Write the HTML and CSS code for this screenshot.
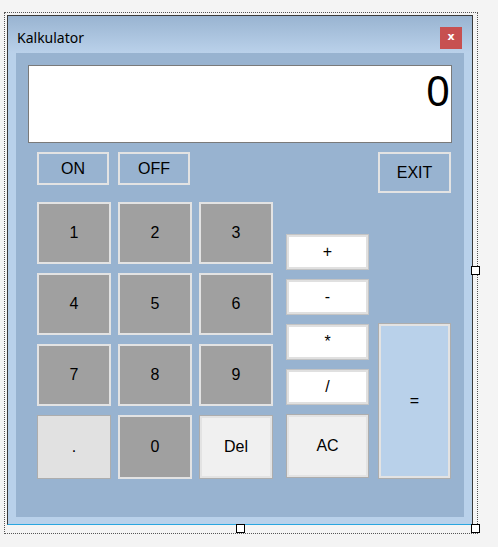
FILE: index.html
```html
<!DOCTYPE html>
<html>
<head>
<meta charset="utf-8">
<title>Kalkulator</title>
<link rel="stylesheet" href="styles.css">
</head>
<body>
<div class="stage">
  <div class="selection">
    <div class="form">
      <div class="titlebar">
        <span class="title">Kalkulator</span>
        <span class="close">x</span>
      </div>
      <div class="client">
        <div class="display">0</div>
        <div class="body">
          <div class="left">
            <div class="power">
              <button class="btn ctrl">ON</button>
              <button class="btn ctrl">OFF</button>
            </div>
            <div class="digits">
              <button class="btn digit">1</button>
              <button class="btn digit">2</button>
              <button class="btn digit">3</button>
              <button class="btn digit">4</button>
              <button class="btn digit">5</button>
              <button class="btn digit">6</button>
              <button class="btn digit">7</button>
              <button class="btn digit">8</button>
              <button class="btn digit">9</button>
              <button class="btn dot">.</button>
              <button class="btn digit">0</button>
              <button class="btn plain">Del</button>
            </div>
          </div>
          <div class="ops">
            <button class="btn op">+</button>
            <button class="btn op">-</button>
            <button class="btn op">*</button>
            <button class="btn op">/</button>
            <button class="btn plain ac">AC</button>
          </div>
          <div class="right">
            <button class="btn ctrl exit">EXIT</button>
            <button class="btn equals">=</button>
          </div>
        </div>
      </div>
    </div>
    <span class="handle h-right"></span>
    <span class="handle h-bottom"></span>
    <span class="handle h-corner"></span>
  </div>
</div>
</body>
</html>
```

FILE: styles.css
```css
html, body {
  margin: 0;
  padding: 0;
  background: #f4f4f4;
}

.stage {
  padding: 12px 0 0 4px;
}

.selection {
  position: relative;
  width: 469px;
  height: 515px;
  border: 1px dotted #555;
  padding: 2px 1px 3px 2px;
  box-sizing: content-box;
}

.form {
  width: 466px;
  height: 510px;
  box-sizing: border-box;
  border: 1px solid #3a3a3a;
  border-bottom-color: #2aa6df;
  background: #b9d1ea;
  display: flex;
  flex-direction: column;
}

.titlebar {
  height: 37px;
  box-sizing: border-box;
  padding: 11px 10px 4px 9px;
  display: flex;
  align-items: center;
  justify-content: space-between;
  background: linear-gradient(#99b4d1, #bad1ea);
}

.title {
  font-family: "Noto Sans", "Open Sans", sans-serif;
  font-size: 14px;
  line-height: 22px;
  color: #000;
}

.close {
  width: 22px;
  height: 22px;
  background: #c75050;
  color: #fff;
  font-family: "DejaVu Sans", sans-serif;
  font-weight: bold;
  font-size: 11px;
  line-height: 20px;
  text-align: center;
}

.client {
  margin: 0 8px;
  height: 464px;
  box-sizing: border-box;
  background: #98b3d0;
  padding: 12px;
}

.display {
  height: 78px;
  box-sizing: border-box;
  border: 1px solid #7a7a7a;
  background: #fff;
  text-align: right;
  font-family: "Noto Sans", "Open Sans", sans-serif;
  font-size: 42px;
  line-height: 42px;
  padding: 3px 1px 0 0;
  color: #000;
}

.body {
  margin-top: 9px;
  padding-left: 9px;
  display: flex;
}

.btn {
  margin: 0;
  padding: 0;
  box-sizing: border-box;
  font-family: "Liberation Sans", Arial, sans-serif;
  font-size: 16px;
  color: #000;
  cursor: default;
}

.left {
  width: 236px;
  display: flex;
  flex-direction: column;
}

.power {
  display: flex;
  gap: 9px;
}

.ctrl {
  width: 72px;
  height: 33px;
  background: transparent;
  border: 2px solid #e3e3e3;
}

.digits {
  margin-top: 17px;
  display: grid;
  grid-template-columns: repeat(3, 74px);
  grid-template-rows: 62px 62px 62px 64px;
  column-gap: 7px;
  row-gap: 9px;
}

.digit {
  background: #a0a0a0;
  border: 2px solid #e3e3e3;
}

.dot {
  background: #e1e1e1;
  border: 1px solid #adadad;
}

.plain {
  background: #f0f0f0;
  border: 1px solid #adadad;
  box-shadow: inset 0 0 0 2px #e3e3e3;
}

.ops {
  margin-left: 13px;
  width: 83px;
  padding-top: 82px;
  display: flex;
  flex-direction: column;
  gap: 9px;
}

.op {
  height: 36px;
  background: #fff;
  border: 1px solid #c4c4c4;
  box-shadow: inset 0 0 0 2px #e0e0e0;
}

.ac {
  height: 64px;
}

.right {
  margin-left: 9px;
  width: 73px;
  display: flex;
  flex-direction: column;
  justify-content: space-between;
}

.exit {
  width: 73px;
  height: 41px;
}

.equals {
  height: 156px;
  background: #b9d1ea;
  border: 1px solid #adadad;
  box-shadow: inset 0 0 0 2px #e3e3e3;
}

.handle {
  position: absolute;
  width: 9px;
  height: 9px;
  box-sizing: border-box;
  background: #fff;
  border: 1px solid #000;
}

.h-right {
  left: 466px;
  top: 253px;
}

.h-bottom {
  left: 231px;
  top: 511px;
}

.h-corner {
  left: 466px;
  top: 511px;
}
```
